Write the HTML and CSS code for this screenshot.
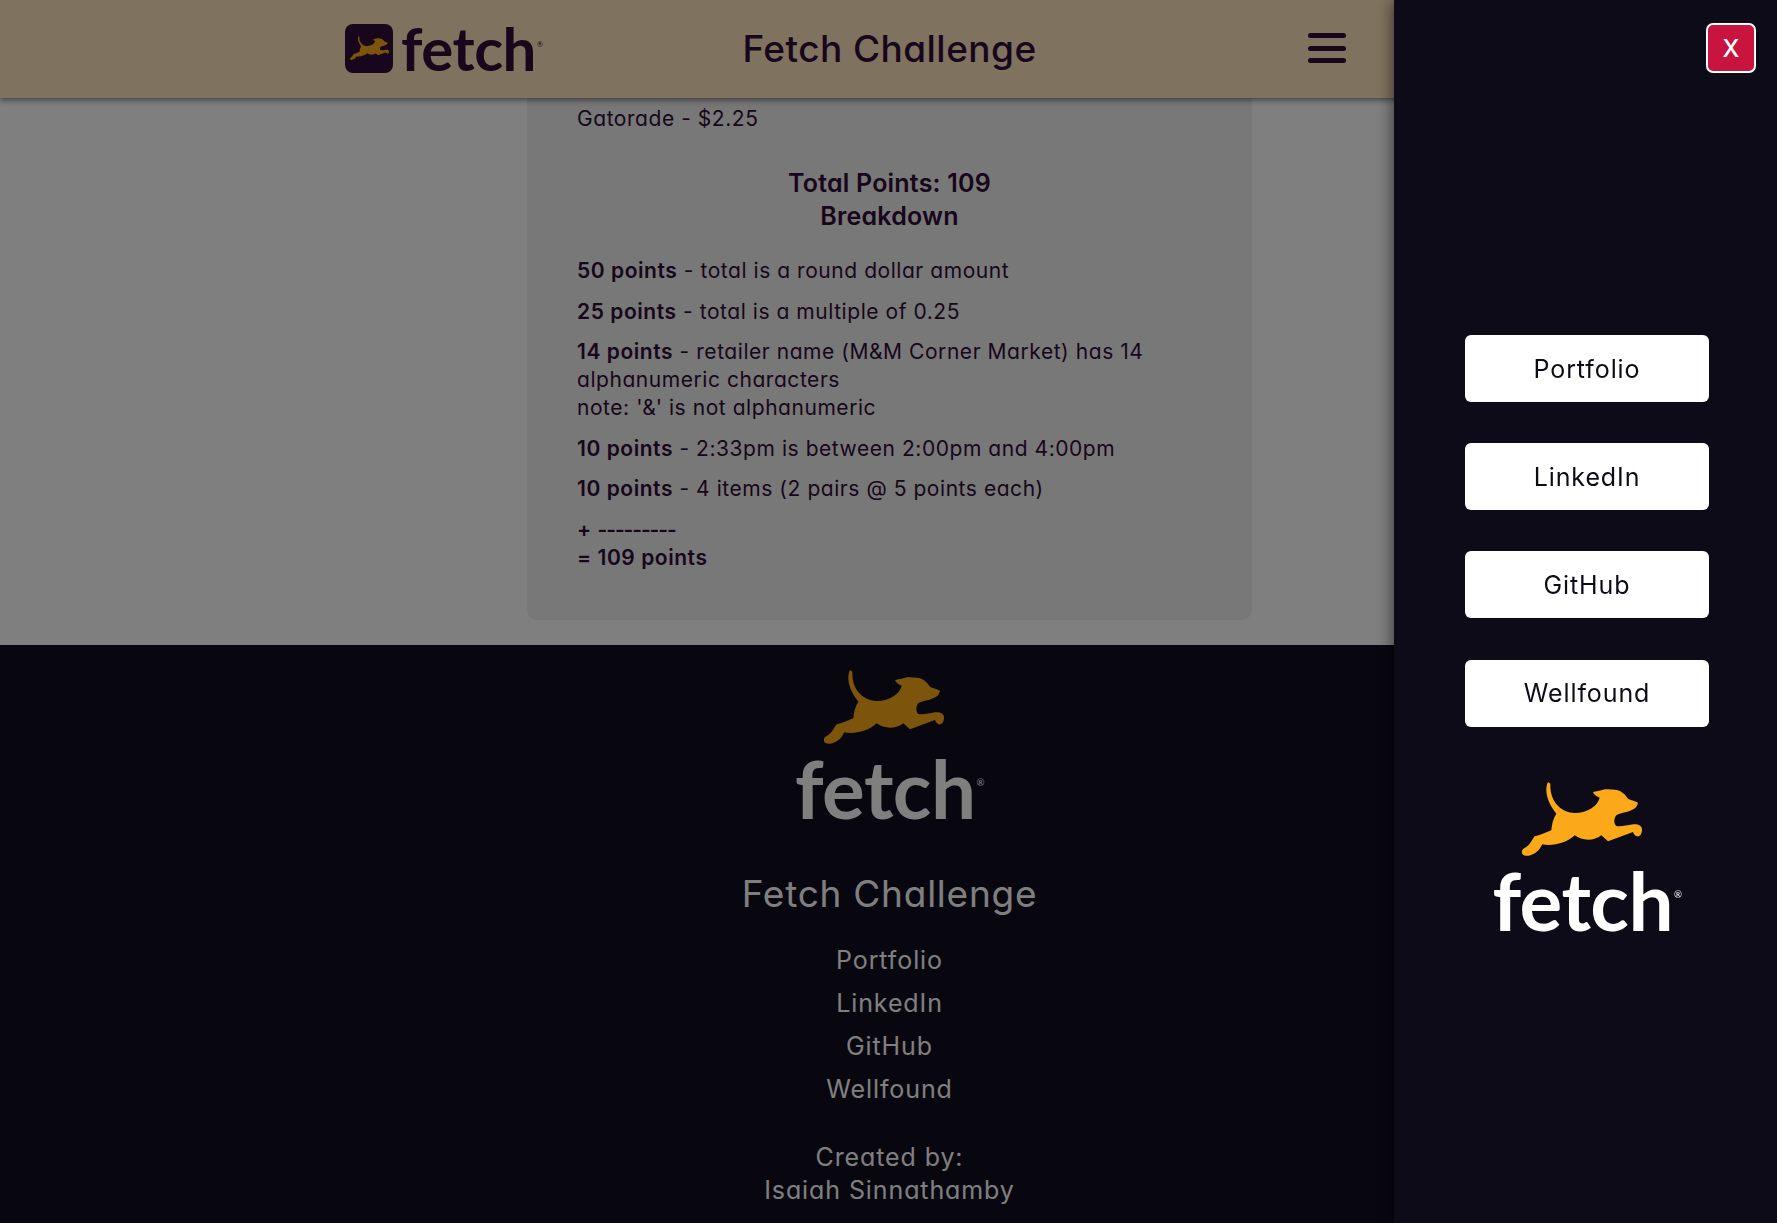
FILE: index.html
```html
<!DOCTYPE html>
<html lang="en">
<head>
    <meta charset="UTF-8">
    <meta name="viewport" content="width=device-width, initial-scale=1.0">
    <title>Fetch Challenge</title>
    <link rel="stylesheet" href="styles.css">
</head>
<body>
    <svg class="defs" width="0" height="0">
        <symbol id="dog" viewBox="187 65 360 222">
            <path d="M265 65C255 85 258 120 290 160C280 175 276 195 275 210C258 216 240 226 225 228C215 240 212 255 195 263C185 268 184 278 190 283C205 292 228 280 240 265L248 252C275 258 320 250 345 225C365 240 400 245 425 225L445 243L520 215C525 232 545 235 547 210C548 195 535 190 520 192C500 195 485 200 470 197C462 190 462 175 470 165C480 158 490 158 500 155C515 150 532 145 535 127C525 120 512 120 505 115C495 100 485 90 465 88C450 87 440 85 430 88C420 92 410 92 400 95C402 103 410 108 420 112C415 135 385 158 345 158C310 158 270 130 272 70Z"/>
        </symbol>
    </svg>

    <header class="header">
        <div class="brand">
            <div class="brand-badge">
                <svg class="dog-small"><use href="#dog"/></svg>
            </div>
            <span class="brand-word">fetch<sup>®</sup></span>
        </div>
        <h1 class="header-title">Fetch Challenge</h1>
        <div class="burger">
            <span></span>
            <span></span>
            <span></span>
        </div>
    </header>

    <main class="content">
        <section class="card">
            <p class="item">Gatorade - $2.25</p>
            <h2 class="total">Total Points: 109<br>Breakdown</h2>
            <p><b>50 points</b> - total is a round dollar amount</p>
            <p><b>25 points</b> - total is a multiple of 0.25</p>
            <p><b>14 points</b> - retailer name (M&amp;M Corner Market) has 14 alphanumeric characters<br>note: '&amp;' is not alphanumeric</p>
            <p><b>10 points</b> - 2:33pm is between 2:00pm and 4:00pm</p>
            <p><b>10 points</b> - 4 items (2 pairs @ 5 points each)</p>
            <p><b>+ <span class="dashes">---------</span><br>= 109 points</b></p>
        </section>
    </main>

    <footer class="footer">
        <div class="logo">
            <svg class="dog"><use href="#dog"/></svg>
            <span class="logo-word">fetch<sup>®</sup></span>
        </div>
        <h2 class="footer-title">Fetch Challenge</h2>
        <nav class="footer-links">
            <a>Portfolio</a>
            <a>LinkedIn</a>
            <a>GitHub</a>
            <a>Wellfound</a>
        </nav>
        <p class="credit">Created by:<br>Isaiah Sinnathamby</p>
    </footer>

    <div class="overlay"></div>

    <aside class="sidebar">
        <button class="close">X</button>
        <nav class="side-links">
            <a>Portfolio</a>
            <a>LinkedIn</a>
            <a>GitHub</a>
            <a>Wellfound</a>
        </nav>
        <div class="logo">
            <svg class="dog"><use href="#dog"/></svg>
            <span class="logo-word">fetch<sup>®</sup></span>
        </div>
    </aside>
</body>
</html>
```

FILE: styles.css
```css
* {
    box-sizing: border-box;
}
html, body {
    height: 1223px;
    overflow: hidden;
}
body {
    margin: 0;
    font-family: Inter, "Noto Sans", sans-serif;
    font-feature-settings: "cv11";
    font-size: 21px;
    line-height: 28px;
    letter-spacing: 0.55px;
    color: #300d38;
    background-color: #fff;
}
p, h1, h2 {
    margin: 0;
}
sup {
    font-size: 0.12em;
    font-weight: 400;
    vertical-align: 3.4em;
    line-height: 0;
    margin-left: 1px;
}
.defs {
    position: absolute;
}

.header {
    position: relative;
    z-index: 1;
    height: 98px;
    padding-left: 2px;
    display: grid;
    grid-template-columns: 1fr auto 1fr;
    align-items: center;
    background-color: #ffe4bc;
    box-shadow: 0 2px 6px rgba(0, 0, 0, 0.5);
}
.brand {
    justify-self: end;
    margin-right: 200px;
    margin-bottom: 2px;
    display: flex;
    align-items: center;
    gap: 8px;
}
.brand-badge {
    width: 48px;
    height: 49px;
    display: flex;
    align-items: center;
    justify-content: center;
    background-color: #300d38;
    border-radius: 8px;
}
.dog-small {
    width: 39px;
    height: 24px;
    fill: #fba919;
}
.brand-word {
    font-family: Lato, sans-serif;
    font-size: 60px;
    font-weight: 700;
    line-height: 60px;
    letter-spacing: -0.5px;
}
.header-title {
    font-size: 37px;
    font-weight: 500;
    line-height: 44px;
    letter-spacing: 0.45px;
}
.burger {
    justify-self: start;
    margin-left: 271px;
    margin-bottom: 2px;
    width: 38px;
    display: flex;
    flex-direction: column;
    gap: 7.5px;
}
.burger span {
    height: 5px;
    background-color: #300d38;
    border-radius: 3px;
}

.content {
    padding-left: 2px;
    padding-bottom: 25px;
    display: flex;
    justify-content: center;
}
.card {
    width: 725px;
    padding: 7px 50px 48px;
    display: flex;
    flex-direction: column;
    gap: 12.5px;
    background-color: #f0f0f0;
    border-radius: 0 0 10px 10px;
}
.card b {
    font-weight: 600;
}
.dashes {
    letter-spacing: -1.1px;
}
.item {
    margin-bottom: 21.5px;
}
.total {
    font-size: 25px;
    font-weight: 600;
    line-height: 33px;
    letter-spacing: 0.2px;
    text-align: center;
    margin-bottom: 11.5px;
}

.footer {
    height: 578px;
    padding-left: 2px;
    padding-top: 25px;
    display: flex;
    flex-direction: column;
    align-items: center;
    background-color: #100c1e;
    color: #fff;
}
.logo {
    display: flex;
    flex-direction: column;
    align-items: center;
}
.dog {
    width: 120px;
    height: 74px;
    margin-right: 11px;
    margin-bottom: 6px;
    fill: #fba919;
}
.logo-word {
    font-family: Lato, sans-serif;
    font-size: 80px;
    font-weight: 700;
    line-height: 76px;
    letter-spacing: -0.5px;
    color: #fff;
}
.footer-title {
    margin-top: 46px;
    font-size: 37px;
    font-weight: 400;
    line-height: 44px;
    letter-spacing: 0.75px;
}
.footer-links {
    margin-top: 23px;
    display: flex;
    flex-direction: column;
    align-items: center;
    font-size: 25px;
    line-height: 43px;
    letter-spacing: 0.9px;
}
.credit {
    margin-top: 30px;
    font-size: 25px;
    line-height: 33px;
    letter-spacing: 0.9px;
    text-align: center;
}

.overlay {
    position: fixed;
    inset: 0;
    z-index: 2;
    background-color: rgba(0, 0, 0, 0.5);
}
.sidebar {
    position: fixed;
    top: 0;
    right: 0;
    z-index: 3;
    width: 383px;
    height: 100%;
    padding-top: 335px;
    display: flex;
    flex-direction: column;
    align-items: center;
    background-color: #0e0b18;
    box-shadow: 0 0 16px rgba(0, 0, 0, 0.6);
}
.close {
    position: absolute;
    top: 23px;
    right: 21px;
    width: 50px;
    height: 50px;
    padding: 0;
    font-family: inherit;
    font-size: 24px;
    font-weight: 500;
    color: #fff;
    background-color: #c8143f;
    border: 2px solid #fff;
    border-radius: 7px;
}
.side-links {
    margin-left: 3px;
    display: flex;
    flex-direction: column;
    gap: 41.2px;
}
.side-links a {
    width: 244px;
    height: 67px;
    display: flex;
    align-items: center;
    justify-content: center;
    font-size: 25px;
    letter-spacing: 0.9px;
    color: #0e0b18;
    background-color: #fff;
    border-radius: 6px;
}
.sidebar .logo {
    margin-top: 55px;
    margin-left: 3px;
}
```
